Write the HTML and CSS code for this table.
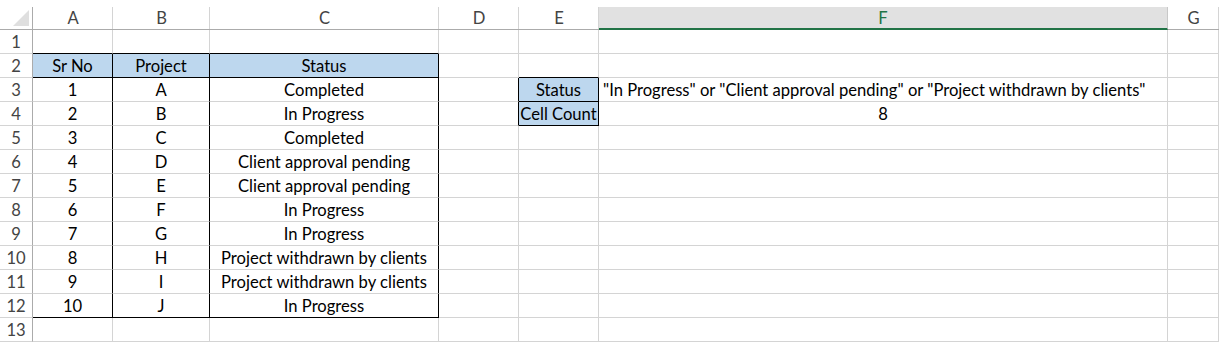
FILE: index.html
```html
<!DOCTYPE html>
<html lang="en">
<head>
<meta charset="utf-8">
<title>Project status count</title>
<link rel="stylesheet" href="styles.css">
</head>
<body>
<div class="sheet">
  <!-- column headers -->
  <div class="ch corner"><svg class="tri" width="16" height="16" viewBox="0 0 16 16"><polygon points="16,0 16,16 0,16" fill="#dfdfdf"/></svg></div>
  <div class="ch">A</div>
  <div class="ch">B</div>
  <div class="ch">C</div>
  <div class="ch">D</div>
  <div class="ch">E</div>
  <div class="ch sel">F</div>
  <div class="ch">G</div>

  <!-- row 1 -->
  <div class="rh">1</div>
  <div class="cell bb"></div><div class="cell bb"></div><div class="cell bb"></div>
  <div class="cell"></div><div class="cell"></div><div class="cell"></div><div class="cell"></div>

  <!-- row 2 -->
  <div class="rh">2</div>
  <div class="cell hd bb br">Sr No</div><div class="cell hd bb br">Project</div><div class="cell hd bb br">Status</div>
  <div class="cell"></div><div class="cell bb"></div><div class="cell"></div><div class="cell"></div>

  <!-- row 3 -->
  <div class="rh">3</div>
  <div class="cell br">1</div><div class="cell br">A</div><div class="cell br">Completed</div>
  <div class="cell br"></div><div class="cell hd bb br">Status</div><div class="cell left">"In Progress" or "Client approval pending" or "Project withdrawn by clients"</div><div class="cell"></div>

  <!-- row 4 -->
  <div class="rh">4</div>
  <div class="cell br">2</div><div class="cell br">B</div><div class="cell br">In Progress</div>
  <div class="cell br"></div><div class="cell hd bb br">Cell Count</div><div class="cell">8</div><div class="cell"></div>

  <!-- row 5 -->
  <div class="rh">5</div>
  <div class="cell br">3</div><div class="cell br">C</div><div class="cell br">Completed</div>
  <div class="cell"></div><div class="cell"></div><div class="cell"></div><div class="cell"></div>

  <!-- row 6 -->
  <div class="rh">6</div>
  <div class="cell br">4</div><div class="cell br">D</div><div class="cell br">Client approval pending</div>
  <div class="cell"></div><div class="cell"></div><div class="cell"></div><div class="cell"></div>

  <!-- row 7 -->
  <div class="rh">7</div>
  <div class="cell br">5</div><div class="cell br">E</div><div class="cell br">Client approval pending</div>
  <div class="cell"></div><div class="cell"></div><div class="cell"></div><div class="cell"></div>

  <!-- row 8 -->
  <div class="rh">8</div>
  <div class="cell br">6</div><div class="cell br">F</div><div class="cell br">In Progress</div>
  <div class="cell"></div><div class="cell"></div><div class="cell"></div><div class="cell"></div>

  <!-- row 9 -->
  <div class="rh">9</div>
  <div class="cell br">7</div><div class="cell br">G</div><div class="cell br">In Progress</div>
  <div class="cell"></div><div class="cell"></div><div class="cell"></div><div class="cell"></div>

  <!-- row 10 -->
  <div class="rh">10</div>
  <div class="cell br">8</div><div class="cell br">H</div><div class="cell br">Project withdrawn by clients</div>
  <div class="cell"></div><div class="cell"></div><div class="cell"></div><div class="cell"></div>

  <!-- row 11 -->
  <div class="rh">11</div>
  <div class="cell br">9</div><div class="cell br">I</div><div class="cell br">Project withdrawn by clients</div>
  <div class="cell"></div><div class="cell"></div><div class="cell"></div><div class="cell"></div>

  <!-- row 12 -->
  <div class="rh">12</div>
  <div class="cell br bb">10</div><div class="cell br bb">J</div><div class="cell br bb">In Progress</div>
  <div class="cell"></div><div class="cell"></div><div class="cell"></div><div class="cell"></div>

  <!-- row 13 -->
  <div class="rh">13</div>
  <div class="cell"></div><div class="cell"></div><div class="cell"></div>
  <div class="cell"></div><div class="cell"></div><div class="cell"></div><div class="cell"></div>
</div>
</body>
</html>
```

FILE: styles.css
```css
html, body {
  margin: 0;
  padding: 0;
  background: #ffffff;
}

body {
  font-family: Lato, "Open Sans", sans-serif;
  font-size: 16.6px;
  color: #000000;
  overflow: hidden;
}

.sheet {
  display: grid;
  grid-template-columns: 33px 80px 97px 229px 80px 80px 569px 51px;
  grid-template-rows: 23px repeat(13, 24px);
  padding-top: 7px;
}

/* column header strip */
.ch {
  box-sizing: border-box;
  display: flex;
  align-items: center;
  justify-content: center;
  color: #444444;
  border-bottom: 1px solid #ababab;
  background: linear-gradient(#d4d4d4, #d4d4d4) right top / 1px 100% no-repeat;
}

.ch.corner {
  justify-content: flex-end;
  align-items: flex-end;
  padding: 0 3px 3px 0;
  border-right: 1px solid #ababab;
  background: none;
}

.tri {
  display: block;
}

.ch.sel {
  background: #e1e1e1;
  color: #217346;
  border-bottom: 2px solid #217346;
  border-right: 1px solid #c8c8c8;
}

/* row header strip */
.rh {
  box-sizing: border-box;
  display: flex;
  align-items: center;
  justify-content: center;
  color: #444444;
  border-right: 1px solid #ababab;
  border-bottom: 1px solid #d4d4d4;
}

/* worksheet cells */
.cell {
  box-sizing: border-box;
  display: flex;
  align-items: center;
  justify-content: center;
  white-space: nowrap;
  border-right: 1px solid #d4d4d4;
  border-bottom: 1px solid #d4d4d4;
  padding-top: 1px;
}

.cell.left {
  justify-content: flex-start;
  padding-left: 4px;
}

.cell.hd {
  background: #bdd7ee;
}

.cell.bb {
  border-bottom-color: #000000;
}

.cell.br {
  border-right-color: #000000;
}
```
